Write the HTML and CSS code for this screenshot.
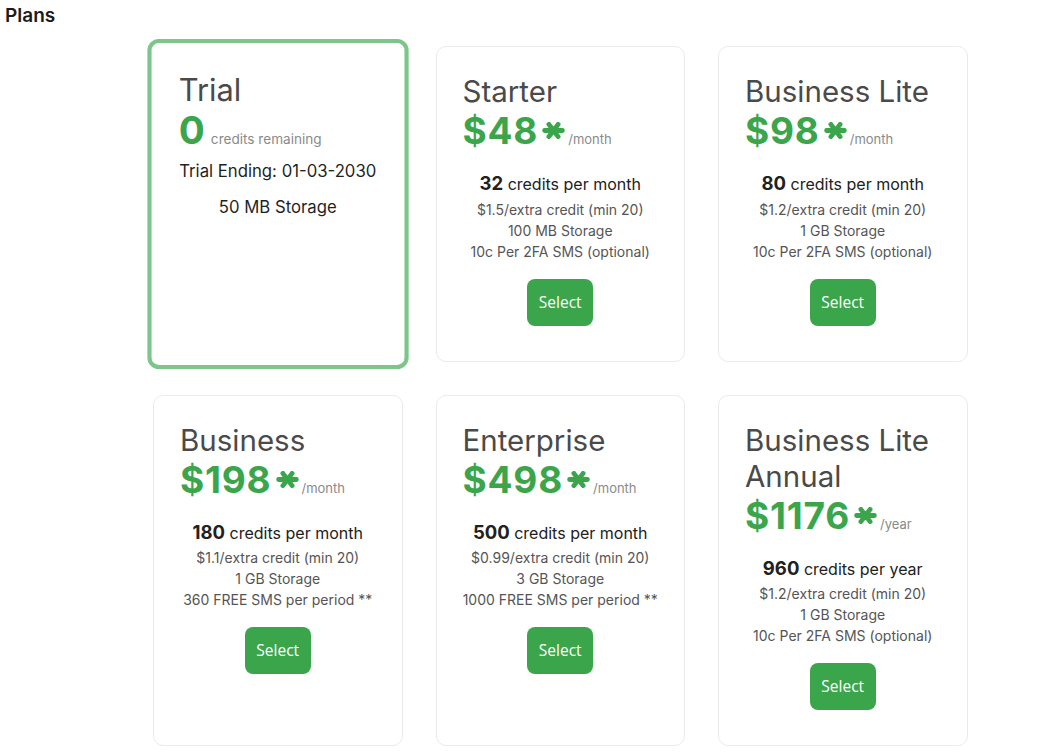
FILE: index.html
```html
<!DOCTYPE html>
<html>
<head>
<meta charset="utf-8">
<link rel="stylesheet" href="styles.css">
</head>
<body>
<h1 class="page-title">Plans</h1>
<div class="plans">
  <div class="card card-current">
    <h2 class="plan-name">Trial</h2>
    <div class="price-line"><span class="price">0</span><span class="unit unit-remaining">credits remaining</span></div>
    <p class="trial-ending">Trial Ending: 01-03-2030</p>
    <p class="trial-storage">50 MB Storage</p>
  </div>

  <div class="card">
    <h2 class="plan-name">Starter</h2>
    <div class="price-line"><span class="price">$48</span><svg class="star" viewBox="0 0 23 17" width="23" height="17"><path d="M2.6 8.5H20.4M6.9 2.4L16.1 14.6M16.1 2.4L6.9 14.6"/></svg><span class="unit">/month</span></div>
    <p class="credits"><strong>32</strong> credits per month</p>
    <ul class="details">
      <li>$1.5/extra credit (min 20)</li>
      <li>100 MB Storage</li>
      <li>10c Per 2FA SMS (optional)</li>
    </ul>
    <div class="actions"><button class="btn-select">Select</button></div>
  </div>

  <div class="card">
    <h2 class="plan-name">Business Lite</h2>
    <div class="price-line"><span class="price">$98</span><svg class="star" viewBox="0 0 23 17" width="23" height="17"><path d="M2.6 8.5H20.4M6.9 2.4L16.1 14.6M16.1 2.4L6.9 14.6"/></svg><span class="unit">/month</span></div>
    <p class="credits"><strong>80</strong> credits per month</p>
    <ul class="details">
      <li>$1.2/extra credit (min 20)</li>
      <li>1 GB Storage</li>
      <li>10c Per 2FA SMS (optional)</li>
    </ul>
    <div class="actions"><button class="btn-select">Select</button></div>
  </div>

  <div class="card">
    <h2 class="plan-name">Business</h2>
    <div class="price-line"><span class="price">$198</span><svg class="star" viewBox="0 0 23 17" width="23" height="17"><path d="M2.6 8.5H20.4M6.9 2.4L16.1 14.6M16.1 2.4L6.9 14.6"/></svg><span class="unit">/month</span></div>
    <p class="credits"><strong>180</strong> credits per month</p>
    <ul class="details">
      <li>$1.1/extra credit (min 20)</li>
      <li>1 GB Storage</li>
      <li>360 FREE SMS per period **</li>
    </ul>
    <div class="actions"><button class="btn-select">Select</button></div>
  </div>

  <div class="card">
    <h2 class="plan-name">Enterprise</h2>
    <div class="price-line"><span class="price">$498</span><svg class="star" viewBox="0 0 23 17" width="23" height="17"><path d="M2.6 8.5H20.4M6.9 2.4L16.1 14.6M16.1 2.4L6.9 14.6"/></svg><span class="unit">/month</span></div>
    <p class="credits"><strong>500</strong> credits per month</p>
    <ul class="details">
      <li>$0.99/extra credit (min 20)</li>
      <li>3 GB Storage</li>
      <li>1000 FREE SMS per period **</li>
    </ul>
    <div class="actions"><button class="btn-select">Select</button></div>
  </div>

  <div class="card">
    <h2 class="plan-name">Business Lite Annual</h2>
    <div class="price-line"><span class="price">$1176</span><svg class="star" viewBox="0 0 23 17" width="23" height="17"><path d="M2.6 8.5H20.4M6.9 2.4L16.1 14.6M16.1 2.4L6.9 14.6"/></svg><span class="unit">/year</span></div>
    <p class="credits"><strong>960</strong> credits per year</p>
    <ul class="details">
      <li>$1.2/extra credit (min 20)</li>
      <li>1 GB Storage</li>
      <li>10c Per 2FA SMS (optional)</li>
    </ul>
    <div class="actions"><button class="btn-select">Select</button></div>
  </div>
</div>
</body>
</html>
```

FILE: styles.css
```css
* { box-sizing: border-box; }

html, body {
  margin: 0;
  padding: 0;
  background: #ffffff;
  font-family: Inter, "Liberation Sans", sans-serif;
  color: #212529;
}

.page-title {
  margin: 0;
  padding: 4px 0 0 5px;
  font-size: 19px;
  line-height: 24px;
  font-weight: 600;
  color: #1b1b1b;
}

.plans {
  display: grid;
  grid-template-columns: repeat(3, 249.5px);
  column-gap: 33px;
  row-gap: 33px;
  margin: 18px 0 0 153px;
  padding-bottom: 20px;
}

.card {
  border: 1px solid #ebebeb;
  border-radius: 10px;
  padding: 26px 26px 35px;
  background: #fff;
  text-align: center;
}

.card-current {
  border: 4px solid #7cc689;
  border-radius: 11px;
  padding: 26px 26px 35px;
  transform: scale(1.045);
}

.plan-name {
  margin: 0;
  font-size: 29.5px;
  line-height: 36px;
  font-weight: 400;
  color: #4a4a4a;
  text-align: left;
}

.price-line {
  text-align: left;
  font-size: 37px;
  line-height: 43px;
  height: 43px;
  white-space: nowrap;
}

.price {
  font-weight: 700;
  color: #3ba54c;
  letter-spacing: 0.8px;
}

.star {
  display: inline-block;
  margin-left: 4px;
  vertical-align: 5px;
  fill: none;
  stroke: #3ba54c;
  stroke-width: 4.8;
  stroke-linecap: round;
}

.unit {
  font-size: 13px;
  line-height: 16px;
  color: #8a8a8a;
  margin-left: 3px;
}

.unit-remaining {
  margin-left: 5px;
}

.credits {
  margin: 20px 0 1px;
  font-size: 16px;
  line-height: 25.5px;
  color: #212121;
}

.credits strong {
  font-weight: 700;
  font-size: 18.5px;
  line-height: 20px;
}

.details {
  list-style: none;
  margin: 0;
  padding: 0;
  font-size: 14px;
  line-height: 21px;
  color: #555555;
}

.actions {
  margin-top: 17px;
  display: flex;
  justify-content: center;
}

.btn-select {
  background: #3ba54c;
  color: #ffffff;
  border: none;
  border-radius: 8px;
  padding: 12px 11.5px;
  font-family: "Open Sans", "Noto Sans", sans-serif;
  font-size: 15.5px;
  line-height: 23px;
}

.trial-ending {
  margin: 5px 0 0;
  font-size: 16px;
  line-height: 24px;
  color: #1f1f1f;
}

.trial-storage {
  margin: 11px 0 0;
  font-size: 16px;
  line-height: 24px;
  color: #1f1f1f;
}
```
